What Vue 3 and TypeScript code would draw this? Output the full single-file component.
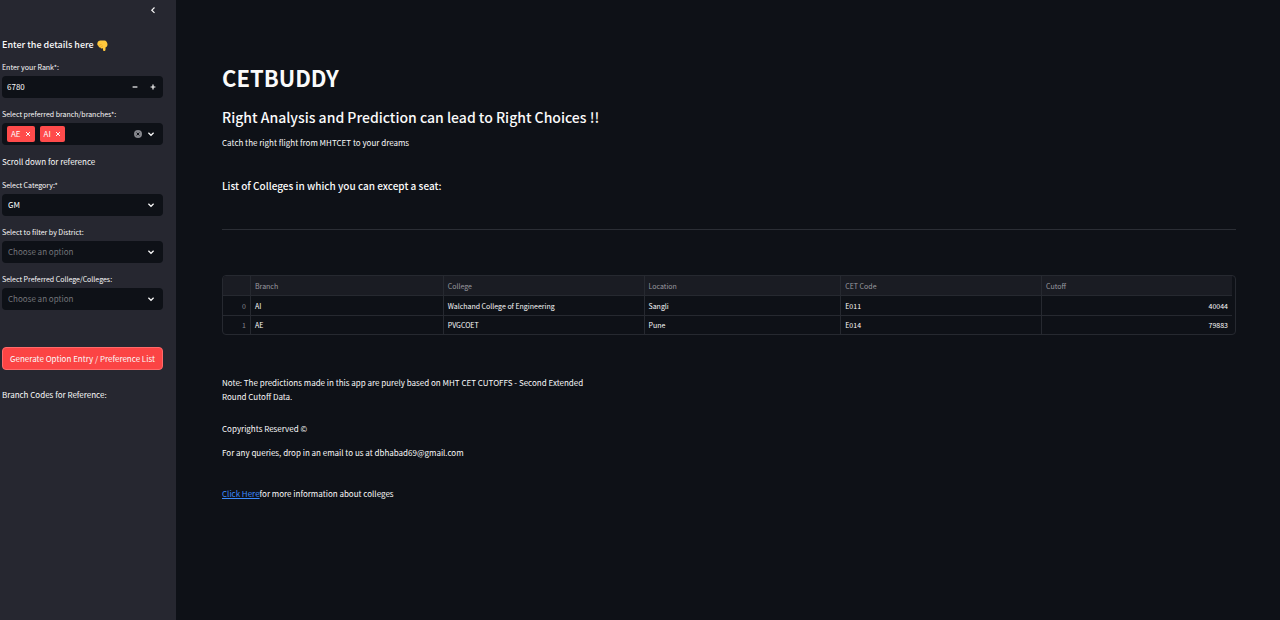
<script setup lang="ts">
import { ref } from 'vue'

interface CollegeRow {
  branch: string
  college: string
  location: string
  code: string
  cutoff: number
}

const rank = ref('6780')
const branches = ref<string[]>(['AE', 'AI'])
const category = ref('GM')
const district = ref('')
const college = ref('')

const rows: CollegeRow[] = [
  { branch: 'AI', college: 'Walchand College of Engineering', location: 'Sangli', code: 'E011', cutoff: 40044 },
  { branch: 'AE', college: 'PVGCOET', location: 'Pune', code: 'E014', cutoff: 79883 },
]

function step(by: number) {
  rank.value = String(Math.max(1, Number(rank.value) + by))
}

function removeBranch(code: string) {
  branches.value = branches.value.filter((b) => b !== code)
}
</script>

<template>
  <div class="app">
    <aside class="sidebar">
      <div class="collapse-row">
        <button class="icon-btn" type="button" aria-label="Collapse sidebar">
          <svg width="10" height="10" viewBox="0 0 10 10"><path d="M6.5 2.5 3.8 5.2l2.7 2.7" /></svg>
        </button>
      </div>

      <h2 class="side-title">
        Enter the details here
        <svg class="hand" width="11" height="11" viewBox="0 0 22 22" aria-hidden="true">
          <path
            d="M1 6C1 3 4 1 7 1h8c3 0 6 4 6 8 0 3-2 5-4 6v4c0 4-5 4-5 0v-3c-2 2-5 1-5-1-2 0-4-1-4-3-2-1-3-3-2-6z"
          />
          <path d="M4 11c1-1 3-2 5-2M7 15c1-2 3-3 5-3" />
        </svg>
      </h2>

      <div class="field">
        <label for="rank">Enter your Rank*:</label>
        <div class="control compact">
          <input id="rank" v-model="rank" class="rank" type="text" inputmode="numeric" />
          <button class="step" type="button" aria-label="Decrease rank" @click="step(-1)">
            <svg width="8" height="8" viewBox="0 0 8 8"><path d="M1.6 4h4.8" /></svg>
          </button>
          <button class="step" type="button" aria-label="Increase rank" @click="step(1)">
            <svg width="8" height="8" viewBox="0 0 8 8"><path d="M1.6 4h4.8M4 1.6v4.8" /></svg>
          </button>
        </div>
      </div>

      <div class="field">
        <label for="branches">Select preferred branch/branches*:</label>
        <div class="control compact multi">
          <span v-for="b in branches" :key="b" class="tag">
            {{ b }}
            <button type="button" :aria-label="`Remove ${b}`" @click="removeBranch(b)">
              <svg width="6" height="6" viewBox="0 0 6 6"><path d="m1 1 4 4M5 1 1 5" /></svg>
            </button>
          </span>
          <input id="branches" class="search" type="text" />
          <button class="clear" type="button" aria-label="Clear all" @click="branches = []">
            <svg width="8" height="8" viewBox="0 0 8 8">
              <circle cx="4" cy="4" r="4" />
              <path d="m2.6 2.6 2.8 2.8M5.4 2.6 2.6 5.4" />
            </svg>
          </button>
          <svg class="chevron" width="8" height="8" viewBox="0 0 8 8"><path d="m1.4 2.8 2.6 2.5 2.6-2.5" /></svg>
        </div>
      </div>

      <p class="side-text">Scroll down for reference</p>

      <div class="field">
        <label for="category">Select Category:*</label>
        <div class="control">
          <select id="category" v-model="category">
            <option value="GM">GM</option>
          </select>
          <svg class="chevron" width="8" height="8" viewBox="0 0 8 8"><path d="m1.4 2.8 2.6 2.5 2.6-2.5" /></svg>
        </div>
      </div>

      <div class="field">
        <label for="district">Select to filter by District:</label>
        <div class="control">
          <select id="district" v-model="district" class="empty">
            <option value="">Choose an option</option>
          </select>
          <svg class="chevron" width="8" height="8" viewBox="0 0 8 8"><path d="m1.4 2.8 2.6 2.5 2.6-2.5" /></svg>
        </div>
      </div>

      <div class="field">
        <label for="college">Select Preferred College/Colleges:</label>
        <div class="control">
          <select id="college" v-model="college" class="empty">
            <option value="">Choose an option</option>
          </select>
          <svg class="chevron" width="8" height="8" viewBox="0 0 8 8"><path d="m1.4 2.8 2.6 2.5 2.6-2.5" /></svg>
        </div>
      </div>

      <button class="generate" type="button">Generate Option Entry / Preference List</button>

      <p class="side-text">Branch Codes for Reference:</p>
    </aside>

    <main class="main">
      <h1>CETBUDDY</h1>
      <h2 class="tagline">Right Analysis and Prediction can lead to Right Choices !!</h2>
      <p>Catch the right flight from MHTCET to your dreams</p>
      <h3>List of Colleges in which you can except a seat:</h3>
      <hr />

      <div class="table-frame">
        <table>
          <colgroup>
            <col class="c-index" />
            <col class="c-branch" />
            <col class="c-college" />
            <col class="c-location" />
            <col class="c-code" />
            <col />
          </colgroup>
          <thead>
            <tr>
              <th aria-label="Index"></th>
              <th>Branch</th>
              <th>College</th>
              <th>Location</th>
              <th>CET Code</th>
              <th>Cutoff</th>
            </tr>
          </thead>
          <tbody>
            <tr v-for="(row, i) in rows" :key="row.code">
              <td class="index">{{ i }}</td>
              <td>{{ row.branch }}</td>
              <td>{{ row.college }}</td>
              <td>{{ row.location }}</td>
              <td>{{ row.code }}</td>
              <td class="number">{{ row.cutoff }}</td>
            </tr>
          </tbody>
        </table>
      </div>

      <footer>
        <p class="note">
          Note: The predictions made in this app are purely based on MHT CET CUTOFFS - Second Extended Round Cutoff Data.
        </p>
        <p class="copyright">Copyrights Reserved ©</p>
        <p class="contact">For any queries, drop in an email to us at dbhabad69@gmail.com</p>
        <p><a href="#">Click Here</a>for more information about colleges</p>
      </footer>
    </main>
  </div>
</template>

<style>
body {
  background: #0e1117;
}
</style>

<style scoped>
.app {
  display: flex;
  min-height: 100vh;
  background: #0e1117;
  color: #fafafa;
  font-family: 'Noto Sans CJK SC', 'Noto Sans', sans-serif;
  font-size: 8px;
  line-height: 14px;
}

h1,
h2,
h3,
p {
  margin: 0;
}

button,
input,
select {
  margin: 0;
  padding: 0;
  border: 0;
  background: none;
  color: inherit;
  font: inherit;
}

button {
  cursor: pointer;
}

svg {
  display: block;
  flex: none;
}

svg path {
  fill: none;
  stroke: currentColor;
  stroke-width: 1.2;
}

.sidebar {
  flex: none;
  box-sizing: border-box;
  width: 176px;
  padding: 5px 13px 0 2px;
  background: #262730;
}

.collapse-row {
  display: flex;
  justify-content: flex-end;
  padding-right: 5px;
}

.side-title {
  display: flex;
  align-items: center;
  gap: 3px;
  margin: 22px 0 7px;
  font-size: 9px;
  font-weight: 500;
  line-height: 16px;
}

.side-title .hand path:first-child {
  fill: #ffc83d;
  stroke: none;
}

.side-title .hand path:last-child {
  stroke: #e59a1c;
}

.field {
  margin-bottom: 9px;
}

.field label {
  display: block;
  margin-bottom: 2px;
  font-size: 7px;
  line-height: 14px;
}

.control {
  display: flex;
  align-items: center;
  box-sizing: border-box;
  height: 22px;
  padding: 0 6px;
  border-radius: 4px;
  background: #0e1117;
}

.compact {
  padding-left: 5px;
}

.rank {
  flex: 1;
  min-width: 0;
}

.step {
  display: flex;
  justify-content: center;
  width: 18px;
}

.step:last-child {
  margin-right: -5px;
}

.multi {
  gap: 5px;
}

.tag {
  display: flex;
  align-items: center;
  gap: 4px;
  height: 16px;
  padding: 0 4px;
  border-radius: 2px;
  background: #ff4b4b;
}

.tag path {
  stroke-width: 1;
}

.search {
  flex: 1;
  min-width: 0;
}

.clear {
  color: #0e1117;
}

.clear circle {
  fill: #85868c;
}

.clear path {
  stroke-width: 1;
}

select {
  flex: 1;
  min-width: 0;
  appearance: none;
}

.empty {
  color: #74757a;
}

.chevron {
  margin-right: 2px;
}

.side-text {
  margin: 10px 0 9px;
}

.generate {
  width: 100%;
  height: 23px;
  margin: 28px 0 8px;
  border: 1px solid #ff6a6a;
  border-radius: 4px;
  background: #fb4444;
}

.main {
  flex: 1;
  min-width: 0;
  padding: 61px 44px 0 46px;
}

h1 {
  font-size: 22px;
  line-height: 32px;
}

.tagline {
  margin: 14px 0 9px;
  font-size: 14px;
  font-weight: 500;
  line-height: 20px;
}

h3 {
  margin-top: 28px;
  font-size: 10px;
  font-weight: 500;
  line-height: 16px;
}

hr {
  height: 1px;
  margin: 35px 0 45px;
  border: 0;
  background: #2b2e35;
}

.table-frame {
  padding-right: 3px;
  overflow: hidden;
  border: 1px solid #262930;
  border-radius: 4px;
}

table {
  width: 100%;
  border-collapse: separate;
  border-spacing: 0;
  table-layout: fixed;
  font-size: 7px;
}

.c-index {
  width: 28px;
}

.c-branch {
  width: 19.1%;
}

.c-college,
.c-code {
  width: 19.9%;
}

.c-location {
  width: 19.5%;
}

th,
td {
  box-sizing: border-box;
  height: 20px;
  padding: 0 4px;
  border-right: 1px solid #262930;
  border-bottom: 1px solid #262930;
  font-weight: 400;
  text-align: left;
}

th {
  background: #1a1c23;
  color: #9a9ba1;
}

th:last-child,
td:last-child {
  border-right: 0;
}

tbody tr:last-child td {
  height: 18px;
  border-bottom: 0;
}

td.index {
  color: #85868c;
  text-align: right;
}

td.number {
  text-align: right;
}

footer {
  margin-top: 41px;
}

.note {
  max-width: 380px;
}

.copyright {
  margin: 18px 0 10px;
}

.contact {
  margin-bottom: 27px;
}

a {
  color: #3d8bfd;
}
</style>
